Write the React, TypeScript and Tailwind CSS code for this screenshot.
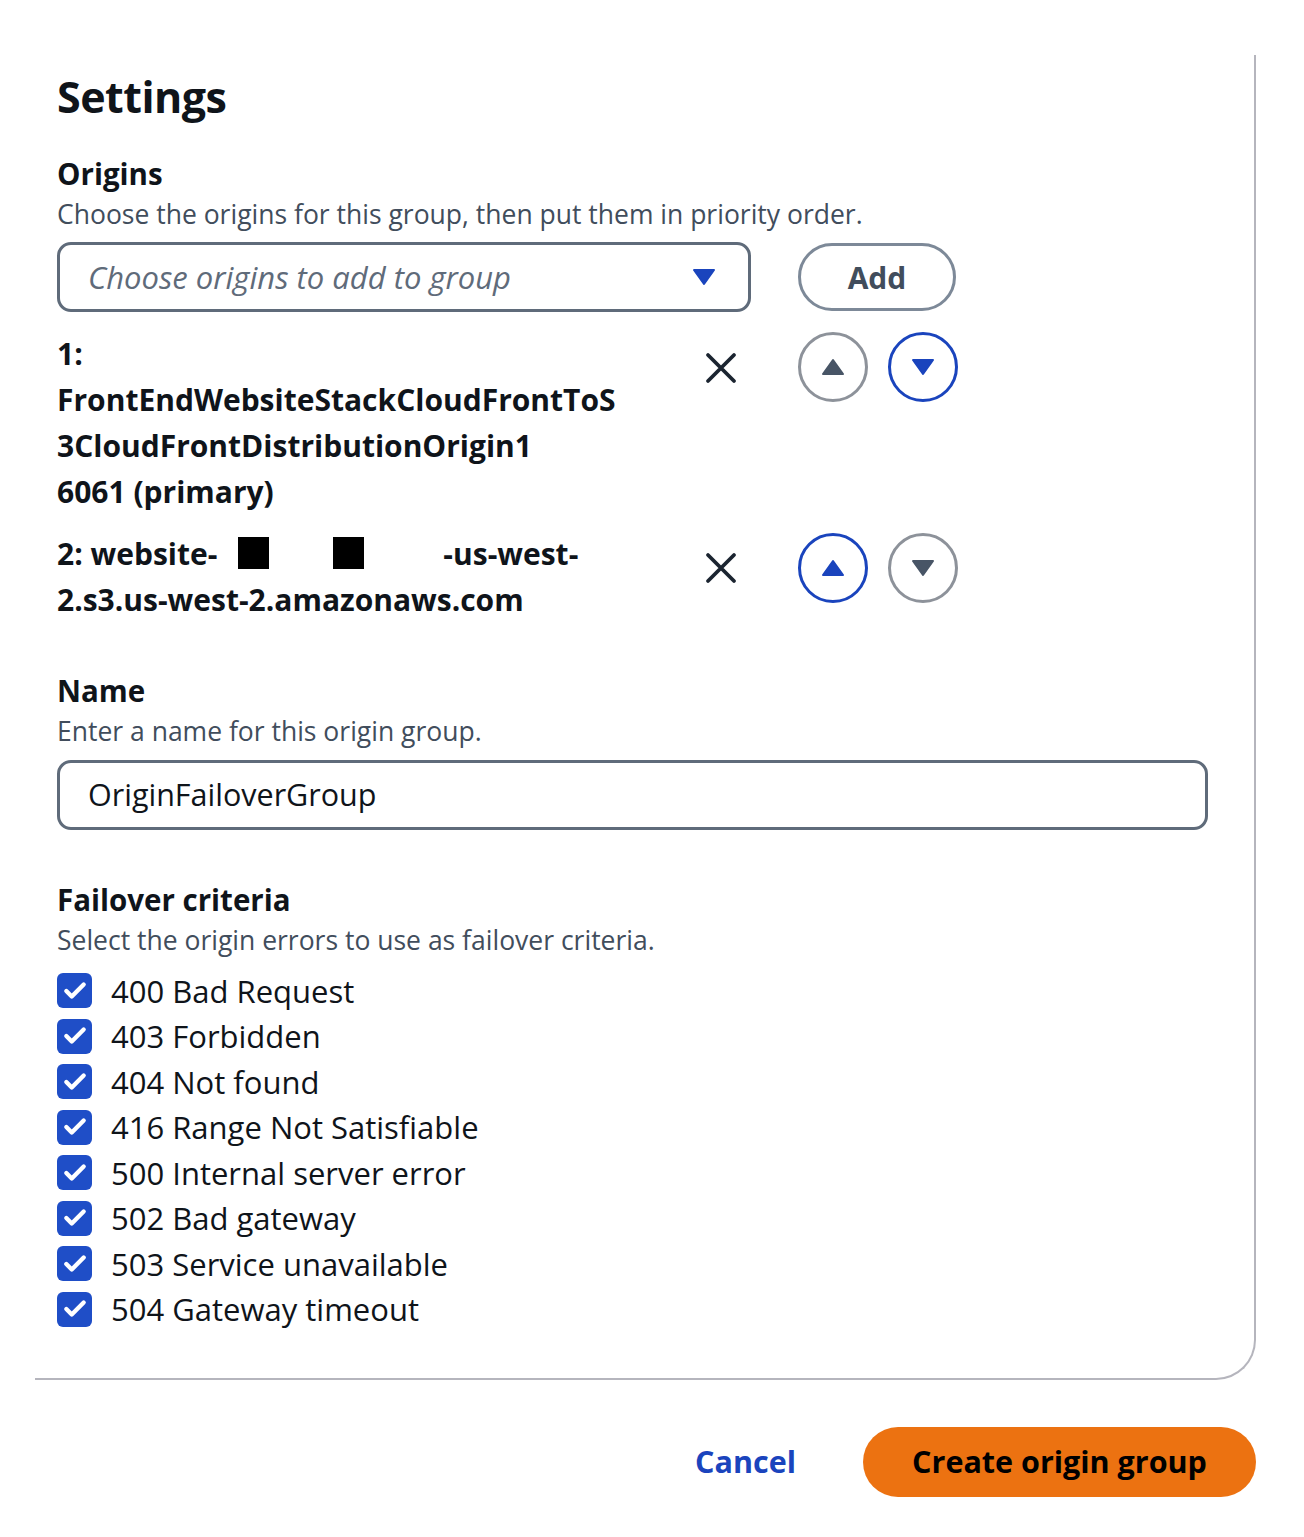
import { Check } from 'lucide-react';

const criteria = [
  '400 Bad Request',
  '403 Forbidden',
  '404 Not found',
  '416 Range Not Satisfiable',
  '500 Internal server error',
  '502 Bad gateway',
  '503 Service unavailable',
  '504 Gateway timeout',
];

const Triangle = ({ up, color }: { up: boolean; color: string }) => (
  <svg width="24" height="18" viewBox="0 0 24 18">
    {up ? (
      <path d="M12 2 L22 16 L2 16 Z" fill={color} stroke={color} strokeWidth="2" strokeLinejoin="round" />
    ) : (
      <path d="M2 2 L22 2 L12 16 Z" fill={color} stroke={color} strokeWidth="2" strokeLinejoin="round" />
    )}
  </svg>
);

const MoveButton = ({ up, active }: { up: boolean; active: boolean }) => (
  <button
    className={`w-[70px] h-[70px] rounded-full border-[3px] flex items-center justify-center ${
      active ? 'border-[#1a44bd]' : 'border-[#8d929a]'
    }`}
  >
    <Triangle up={up} color={active ? '#1a44bd' : '#485566'} />
  </button>
);

const RemoveIcon = () => (
  <svg width="32" height="32" viewBox="0 0 32 32" className="shrink-0">
    <path d="M3 3 L29 29 M29 3 L3 29" stroke="#1b2430" strokeWidth="3.8" strokeLinecap="round" />
  </svg>
);

const Redacted = ({ className }: { className: string }) => (
  <span className={`inline-block w-[31px] h-[32px] bg-black align-[-4px] ${className}`} />
);

const App = () => {
  return (
    <div className="min-h-screen bg-white font-['Open_Sans',sans-serif] text-[#0f141a] pb-10">
      <div className="ml-[35px] w-[1221px] mt-[55px] border-r-2 border-b-2 border-[#b5b5bd] rounded-br-[40px] pl-[22px] pr-[46px] pt-[18px] pb-[46px]">
        <h2 className="text-[43px] leading-[48px] font-bold tracking-[-0.5px]">Settings</h2>

        {/* Origins */}
        <div className="mt-[33px]">
          <div className="text-[29.5px] leading-[40px] font-bold">Origins</div>
          <div className="text-[26.5px] leading-[40px] text-[#414d5c]">
            Choose the origins for this group, then put them in priority order.
          </div>
          <div className="flex items-center mt-[8px]">
            <div className="w-[694px] h-[70px] border-[3px] border-[#5f6b7a] rounded-[14px] pl-[28px] pr-[32px] flex items-center justify-between">
              <span className="italic text-[31px] text-[#5f6b7a]">Choose origins to add to group</span>
              <Triangle up={false} color="#1a44bd" />
            </div>
            <button className="ml-[47px] w-[158px] h-[68px] border-[3px] border-[#7d8998] rounded-full text-[30px] font-bold text-[#414d5c]">
              Add
            </button>
          </div>

          {/* Origin 1 */}
          <div className="flex items-start mt-[19px]">
            <div className="w-[600px] text-[30px] leading-[46px] font-bold whitespace-nowrap">
              <div>1:</div>
              <div>FrontEndWebsiteStackCloudFrontToS</div>
              <div>3CloudFrontDistributionOrigin1</div>
              <div>6061 (primary)</div>
            </div>
            <div className="ml-[48px] mt-[21px]">
              <RemoveIcon />
            </div>
            <div className="ml-[61px] mt-[1px] flex gap-[20px]">
              <MoveButton up active={false} />
              <MoveButton up={false} active />
            </div>
          </div>

          {/* Origin 2 */}
          <div className="flex items-start mt-[16px]">
            <div className="w-[600px] text-[30px] leading-[46px] font-bold whitespace-nowrap">
              <div>
                2: website-
                <Redacted className="ml-[21px]" />
                <Redacted className="ml-[64px]" />
                <span className="ml-[79px]">-us-west-</span>
              </div>
              <div>2.s3.us-west-2.amazonaws.com</div>
            </div>
            <div className="ml-[48px] mt-[21px]">
              <RemoveIcon />
            </div>
            <div className="ml-[61px] mt-[2px] flex gap-[20px]">
              <MoveButton up active />
              <MoveButton up={false} active={false} />
            </div>
          </div>
        </div>

        {/* Name */}
        <div className="mt-[48px]">
          <div className="text-[29.5px] leading-[40px] font-bold">Name</div>
          <div className="text-[26.5px] leading-[40px] text-[#414d5c]">Enter a name for this origin group.</div>
          <div className="mt-[9px] w-[1151px] h-[70px] border-[3px] border-[#5f6b7a] rounded-[14px] pl-[28px] flex items-center">
            <span className="text-[30.5px] text-[#0f141a]">OriginFailoverGroup</span>
          </div>
        </div>

        {/* Failover criteria */}
        <div className="mt-[50px]">
          <div className="text-[29.5px] leading-[40px] font-bold">Failover criteria</div>
          <div className="text-[26.5px] leading-[40px] text-[#414d5c]">
            Select the origin errors to use as failover criteria.
          </div>
          <div className="mt-[8px]">
            {criteria.map((label) => (
              <div key={label} className="h-[45.5px] flex items-center">
                <span className="w-[35px] h-[35px] rounded-[6px] bg-[#1f4ec7] flex items-center justify-center">
                  <Check className="w-[26px] h-[26px] text-white" strokeWidth={4} />
                </span>
                <span className="ml-[19px] text-[31px] text-[#0f141a]">{label}</span>
              </div>
            ))}
          </div>
        </div>
      </div>

      {/* Footer actions */}
      <div className="w-[1256px] mt-[47px] flex justify-end items-center">
        <button className="text-[30.5px] font-bold text-[#1a44bd] mr-[67px]">Cancel</button>
        <button className="w-[393px] h-[70px] rounded-full bg-[#ec7211] text-[30.5px] font-bold text-black">
          Create origin group
        </button>
      </div>
    </div>
  );
};

export default App;
